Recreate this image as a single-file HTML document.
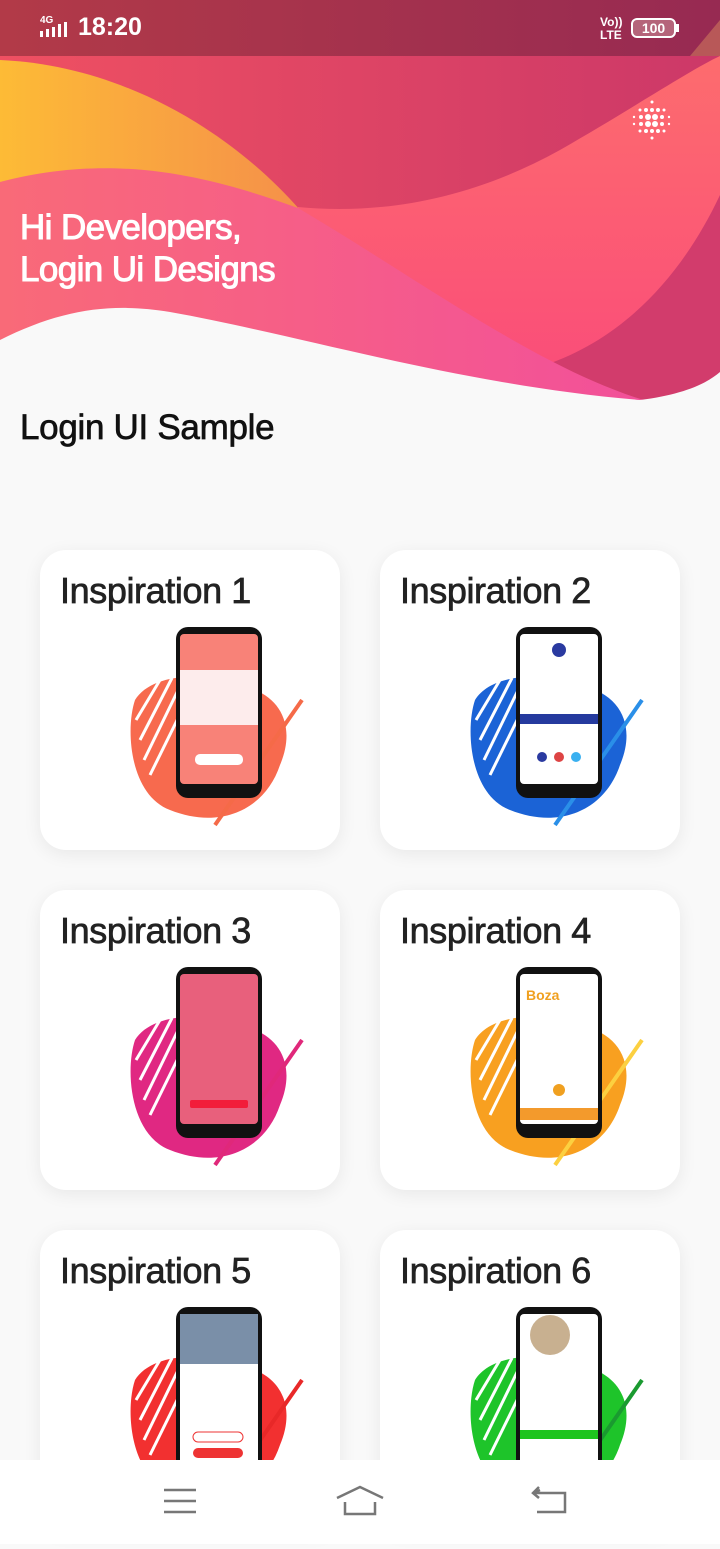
<!DOCTYPE html>
<html><head><meta charset="utf-8"><style>
*{margin:0;padding:0;box-sizing:border-box}
body{width:720px;height:1544px;overflow:hidden;background:#f9f9f9;font-family:"Liberation Sans",sans-serif;position:relative}
.hdr{position:absolute;left:0;top:0}
.time{position:absolute;left:78px;top:13px;color:#fff;font-size:25px;font-weight:bold}
.hi{position:absolute;left:20px;top:207px;color:#fff;font-size:35px;line-height:42px;letter-spacing:-0.6px;-webkit-text-stroke:1px #fff}
.sec{position:absolute;left:20px;top:408px;font-size:35px;color:#111;letter-spacing:-0.3px;-webkit-text-stroke:0.7px #111}
.card{position:absolute;width:300px;height:300px;background:#fff;border-radius:26px;box-shadow:0 4px 18px rgba(0,0,0,0.07);overflow:hidden}
.card h2{position:absolute;left:20px;top:20px;font-size:36px;font-weight:normal;color:#222;letter-spacing:-0.4px;-webkit-text-stroke:0.7px #222}
.card svg{position:absolute;left:0;top:0}
.nav{position:absolute;left:0;top:1460px;width:720px;height:84px;background:#fff}
</style></head><body>
<svg class="hdr" width="720" height="410" viewBox="0 0 720 410">
<defs>
<linearGradient id="g1" x1="0" x2="1"><stop offset="0" stop-color="#ef5062"/><stop offset="1" stop-color="#cc3868"/></linearGradient>
<linearGradient id="gy" x1="0" x2="1"><stop offset="0" stop-color="#fdbb36"/><stop offset="1" stop-color="#f5904a"/></linearGradient>
<linearGradient id="gp" x1="0" x2="1"><stop offset="0" stop-color="#f96a78"/><stop offset="1" stop-color="#f2509a"/></linearGradient>
<linearGradient id="gc" x1="0" x2="0" y1="0" y2="1"><stop offset="0" stop-color="#fd6c6e"/><stop offset="1" stop-color="#fa4a7a"/></linearGradient>
<linearGradient id="gs" x1="0" x2="1"><stop offset="0" stop-color="#b23a48"/><stop offset="1" stop-color="#972a52"/></linearGradient>
</defs>
<rect x="0" y="56" width="720" height="354" fill="url(#g1)"/>
<path d="M298,207 C380,215 470,200 560,150 C630,110 690,70 720,56 L720,410 L300,410 Z" fill="url(#gc)"/>
<path d="M720,195 C680,280 620,340 545,365 L560,410 L720,410 Z" fill="#d23c6c"/>
<path d="M0,60 C120,65 230,130 300,210 L0,250 Z" fill="url(#gy)"/>
<path d="M0,182 C120,150 220,180 298,208 C420,280 540,370 650,402 L0,402 Z" fill="url(#gp)"/>
<path d="M0,340 C60,310 110,302 170,312 C300,335 460,385 640,400 C680,395 705,385 720,372 L720,410 L0,410 Z" fill="#f9f9f9"/>
<rect x="0" y="0" width="720" height="56" fill="url(#gs)"/>
<path d="M690,56 L720,20 L720,56 Z" fill="#b85858"/>
<g fill="#fff">
<circle cx="652" cy="102" r="1.5"/><circle cx="646" cy="110" r="2"/><circle cx="652" cy="110" r="2"/><circle cx="658" cy="110" r="2"/><circle cx="664" cy="110" r="1.5"/><circle cx="640" cy="110" r="1.5"/>
<circle cx="634" cy="117" r="1.2"/><circle cx="641" cy="117" r="2"/><circle cx="648" cy="117" r="3"/><circle cx="655" cy="117" r="3"/><circle cx="662" cy="117" r="2"/><circle cx="669" cy="117" r="1.2"/>
<circle cx="634" cy="124" r="1.2"/><circle cx="641" cy="124" r="2"/><circle cx="648" cy="124" r="3"/><circle cx="655" cy="124" r="3"/><circle cx="662" cy="124" r="2"/><circle cx="669" cy="124" r="1.2"/>
<circle cx="640" cy="131" r="1.5"/><circle cx="646" cy="131" r="2"/><circle cx="652" cy="131" r="2"/><circle cx="658" cy="131" r="2"/><circle cx="664" cy="131" r="1.5"/><circle cx="652" cy="138" r="1.5"/>
<rect x="40" y="31" width="3" height="6"/><rect x="46" y="29" width="3" height="8"/><rect x="52" y="27" width="3" height="10"/><rect x="58" y="24" width="3" height="13"/><rect x="64" y="22" width="3" height="15"/>
<text x="40" y="23" font-size="10" font-weight="bold" font-family="Liberation Sans">4G</text>
<text x="600" y="26" font-size="12" font-weight="bold" font-family="Liberation Sans">Vo))</text>
<text x="600" y="39" font-size="12" font-weight="bold" font-family="Liberation Sans">LTE</text>
</g>
<rect x="632" y="19" width="43" height="18" rx="5" fill="#c88a96" fill-opacity="0.6" stroke="#fff" stroke-width="2"/>
<rect x="676" y="24" width="3" height="8" fill="#fff"/>
<text x="653.5" y="33" font-size="14" fill="#fff" font-weight="bold" text-anchor="middle" font-family="Liberation Sans">100</text>
</svg>
<div class="time">18:20</div>
<div class="hi">Hi Developers,<br>Login Ui Designs</div>
<div class="sec">Login UI Sample</div>

<div class="card" style="left:40px;top:550px"><h2>Inspiration 1</h2>
<svg width="300" height="300"><path d="M95,150 C110,125 160,120 200,135 C245,145 255,180 240,215 C225,260 180,280 130,260 C90,245 85,180 95,150Z" fill="#f76a4e"/>
<g stroke="#fff" stroke-width="3"><line x1="96" y1="170" x2="120" y2="130"/><line x1="100" y1="190" x2="132" y2="128"/><line x1="104" y1="210" x2="144" y2="128"/><line x1="110" y1="225" x2="152" y2="140"/></g>
<line x1="262" y1="150" x2="175" y2="275" stroke="#f56a48" stroke-width="4"/>
<rect x="136" y="77" width="86" height="171" rx="12" fill="#111"/><rect x="140" y="84" width="78" height="150" rx="4" fill="#f88278"/><rect x="140" y="120" width="78" height="55" fill="#fdecec"/><rect x="155" y="204" width="48" height="11" rx="5" fill="#fff"/></svg></div>

<div class="card" style="left:380px;top:550px"><h2>Inspiration 2</h2>
<svg width="300" height="300"><path d="M95,150 C110,125 160,120 200,135 C245,145 255,180 240,215 C225,260 180,280 130,260 C90,245 85,180 95,150Z" fill="#1b63d6"/>
<g stroke="#fff" stroke-width="3"><line x1="96" y1="170" x2="120" y2="130"/><line x1="100" y1="190" x2="132" y2="128"/><line x1="104" y1="210" x2="144" y2="128"/><line x1="110" y1="225" x2="152" y2="140"/></g>
<line x1="262" y1="150" x2="175" y2="275" stroke="#2a8fe8" stroke-width="4"/>
<rect x="136" y="77" width="86" height="171" rx="12" fill="#111"/><rect x="140" y="84" width="78" height="150" rx="4" fill="#fff"/><circle cx="179" cy="100" r="7" fill="#2a3aa0"/><rect x="140" y="164" width="78" height="10" fill="#253a9e"/><circle cx="162" cy="207" r="5" fill="#2a3aa0"/><circle cx="179" cy="207" r="5" fill="#d44"/><circle cx="196" cy="207" r="5" fill="#3ab0f0"/></svg></div>

<div class="card" style="left:40px;top:890px"><h2>Inspiration 3</h2>
<svg width="300" height="300"><path d="M95,150 C110,125 160,120 200,135 C245,145 255,180 240,215 C225,260 180,280 130,260 C90,245 85,180 95,150Z" fill="#e02882"/>
<g stroke="#fff" stroke-width="3"><line x1="96" y1="170" x2="120" y2="130"/><line x1="100" y1="190" x2="132" y2="128"/><line x1="104" y1="210" x2="144" y2="128"/><line x1="110" y1="225" x2="152" y2="140"/></g>
<line x1="262" y1="150" x2="175" y2="275" stroke="#e0287a" stroke-width="4"/>
<rect x="136" y="77" width="86" height="171" rx="12" fill="#111"/><rect x="140" y="84" width="78" height="150" rx="4" fill="#e8607c"/><rect x="150" y="210" width="58" height="8" rx="2" fill="#f21d3a"/></svg></div>

<div class="card" style="left:380px;top:890px"><h2>Inspiration 4</h2>
<svg width="300" height="300"><path d="M95,150 C110,125 160,120 200,135 C245,145 255,180 240,215 C225,260 180,280 130,260 C90,245 85,180 95,150Z" fill="#f8a020"/>
<g stroke="#fff" stroke-width="3"><line x1="96" y1="170" x2="120" y2="130"/><line x1="100" y1="190" x2="132" y2="128"/><line x1="104" y1="210" x2="144" y2="128"/><line x1="110" y1="225" x2="152" y2="140"/></g>
<line x1="262" y1="150" x2="175" y2="275" stroke="#fcd040" stroke-width="4"/>
<rect x="136" y="77" width="86" height="171" rx="12" fill="#111"/><rect x="140" y="84" width="78" height="150" rx="4" fill="#fff"/><text x="146" y="110" font-size="14" fill="#f0a020" font-family="Liberation Sans" font-weight="bold">Boza</text><circle cx="179" cy="200" r="6" fill="#f0a020"/><rect x="140" y="218" width="78" height="12" fill="#f39a2c"/></svg></div>

<div class="card" style="left:40px;top:1230px"><h2>Inspiration 5</h2>
<svg width="300" height="300"><path d="M95,150 C110,125 160,120 200,135 C245,145 255,180 240,215 C225,260 180,280 130,260 C90,245 85,180 95,150Z" fill="#f23030"/>
<g stroke="#fff" stroke-width="3"><line x1="96" y1="170" x2="120" y2="130"/><line x1="100" y1="190" x2="132" y2="128"/><line x1="104" y1="210" x2="144" y2="128"/><line x1="110" y1="225" x2="152" y2="140"/></g>
<line x1="262" y1="150" x2="175" y2="275" stroke="#e82828" stroke-width="4"/>
<rect x="136" y="77" width="86" height="171" rx="12" fill="#111"/><rect x="140" y="84" width="78" height="150" rx="4" fill="#fff"/><rect x="140" y="84" width="78" height="50" fill="#7a8fa8"/><rect x="153" y="202" width="50" height="10" rx="5" fill="none" stroke="#e33" /><rect x="153" y="218" width="50" height="10" rx="5" fill="#e33"/></svg></div>

<div class="card" style="left:380px;top:1230px"><h2>Inspiration 6</h2>
<svg width="300" height="300"><path d="M95,150 C110,125 160,120 200,135 C245,145 255,180 240,215 C225,260 180,280 130,260 C90,245 85,180 95,150Z" fill="#1ec42a"/>
<g stroke="#fff" stroke-width="3"><line x1="96" y1="170" x2="120" y2="130"/><line x1="100" y1="190" x2="132" y2="128"/><line x1="104" y1="210" x2="144" y2="128"/><line x1="110" y1="225" x2="152" y2="140"/></g>
<line x1="262" y1="150" x2="175" y2="275" stroke="#1a9a30" stroke-width="4"/>
<rect x="136" y="77" width="86" height="171" rx="12" fill="#111"/><rect x="140" y="84" width="78" height="150" rx="4" fill="#fff"/><circle cx="170" cy="105" r="20" fill="#c8b090"/><rect x="140" y="200" width="78" height="9" fill="#1ec41e"/></svg></div>

<div class="nav"><svg width="720" height="84">
<g stroke="#777" stroke-width="2.5" fill="none">
<line x1="164" y1="30" x2="196" y2="30"/><line x1="164" y1="41" x2="196" y2="41"/><line x1="164" y1="52" x2="196" y2="52"/>
<path d="M337,38 L360,27 L383,38"/><path d="M345,42 L345,54 L375,54 L375,42"/>
<path d="M540,30 L533,33 L565,33 L565,52 L537,52"/><path d="M539,27 L533,33 L539,38"/>
</g></svg></div>
</body></html>
